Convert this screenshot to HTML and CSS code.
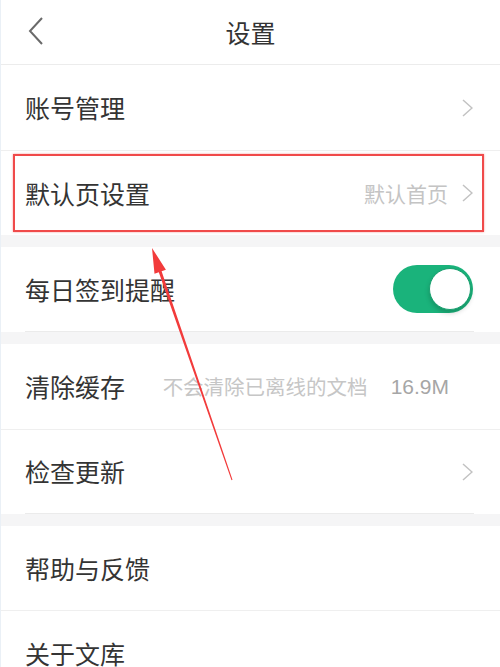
FILE: index.html
```html
<!DOCTYPE html>
<html lang="zh-CN">
<head>
<meta charset="utf-8">
<title>设置</title>
<link rel="stylesheet" href="styles.css">
</head>
<body>
<div class="page">
  <header class="header">
    <svg class="back" width="16" height="28" viewBox="0 0 16 28"><path d="M14 1 L2 14 L14 27" fill="none" stroke="#6a6a6a" stroke-width="2"/></svg>
    <h1 class="title">设置</h1>
  </header>

  <section class="group">
    <div class="row">
      <span class="label">账号管理</span>
      <svg class="chev" width="11" height="18" viewBox="0 0 11 18"><path d="M1 1 L10 9 L1 17" fill="none" stroke="#c2c2c2" stroke-width="1.5"/></svg>
    </div>
    <div class="row sep">
      <span class="label">默认页设置</span>
      <span class="value">默认首页</span>
      <svg class="chev" width="11" height="18" viewBox="0 0 11 18"><path d="M1 1 L10 9 L1 17" fill="none" stroke="#c2c2c2" stroke-width="1.5"/></svg>
      <div class="highlight"></div>
    </div>
  </section>

  <section class="group inset">
    <div class="row short">
      <span class="label">每日签到提醒</span>
      <span class="toggle"><span class="knob"></span></span>
    </div>
  </section>

  <section class="group inset">
    <div class="row">
      <span class="label">清除缓存</span>
      <span class="hint">不会清除已离线的文档</span>
      <span class="size">16.9M</span>
    </div>
    <div class="row sep short">
      <span class="label">检查更新</span>
      <svg class="chev" width="11" height="18" viewBox="0 0 11 18"><path d="M1 1 L10 9 L1 17" fill="none" stroke="#c2c2c2" stroke-width="1.5"/></svg>
    </div>
  </section>

  <section class="group">
    <div class="row short">
      <span class="label">帮助与反馈</span>
    </div>
    <div class="row sep">
      <span class="label">关于文库</span>
    </div>
  </section>

  <svg class="arrow" width="500" height="667" viewBox="0 0 500 667">
    <polygon points="152,248 165.9,269.7 161.6,271.2 232.5,479.8 231.5,480.2 158.8,272.2 154.5,273.7" fill="#f23b3b"/>
  </svg>
</div>
</body>
</html>
```

FILE: styles.css
```css
html, body {
  margin: 0;
  padding: 0;
  background: #f5f5f6;
}
body {
  font-family: "Noto Sans CJK SC", "Noto Sans", sans-serif;
  color: #333;
}
.page {
  position: relative;
  width: 500px;
  height: 667px;
  overflow: hidden;
  background: #f5f5f6;
  box-sizing: border-box;
  border-left: 1px solid #eaf0f6;
}
.header {
  position: relative;
  height: 64px;
  border-bottom: 1px solid #ececec;
  background: #fff;
  display: flex;
  align-items: center;
  justify-content: center;
}
.back {
  position: absolute;
  left: 27px;
  top: 17px;
}
.title {
  margin: 0;
  font-size: 25px;
  font-weight: 400;
  color: #333;
  line-height: 1;
  padding-left: 0;
}
.group {
  background: #fff;
  margin-bottom: 12px;
}
.group.inset {
  padding-bottom: 1px;
  background-image: linear-gradient(#ebebeb, #ebebeb);
  background-size: 449px 1px;
  background-position: 24px 100%;
  background-repeat: no-repeat;
  background-color: #fff;
}
.row {
  position: relative;
  height: 85px;
  display: flex;
  align-items: center;
  padding: 0 27px 0 24px;
  box-sizing: border-box;
}
.row.short {
  height: 84px;
}
.row.sep {
  border-top: 1px solid #efefef;
}
.label {
  font-size: 25px;
  color: #343434;
  letter-spacing: 0;
  line-height: 1;
}
.chev {
  margin-left: auto;
}
.value {
  margin-left: auto;
  margin-right: 14px;
  font-size: 21px;
  color: #c4c4c4;
  line-height: 1;
}
.value + .chev {
  margin-left: 0;
}
.hint {
  margin-left: auto;
  font-size: 20.5px;
  color: #c6c6c6;
  line-height: 1;
}
.size {
  margin-left: 23px;
  margin-right: 24px;
  font-size: 21px;
  color: #a6a6a6;
  line-height: 1;
  font-family: "Liberation Sans", "Noto Sans", sans-serif;
}
.toggle {
  margin-left: auto;
  width: 80px;
  height: 48px;
  border-radius: 24px;
  background: #1ab37b;
  display: flex;
  align-items: center;
  justify-content: flex-end;
  padding-right: 2px;
  box-sizing: border-box;
}
.knob {
  width: 42px;
  height: 42px;
  border-radius: 50%;
  background: #fff;
  border: 1px solid #19a06f;
  box-sizing: border-box;
  box-shadow: 0 3px 5px rgba(0, 0, 0, 0.18);
}
.highlight {
  position: absolute;
  left: 12px;
  right: 16px;
  top: 3px;
  bottom: 3px;
  border: 2px solid #f04a4a;
  box-shadow: 0 0 2px rgba(240, 60, 60, 0.5);
  pointer-events: none;
}
.arrow {
  position: absolute;
  left: -1px;
  top: 0;
  pointer-events: none;
}
```
